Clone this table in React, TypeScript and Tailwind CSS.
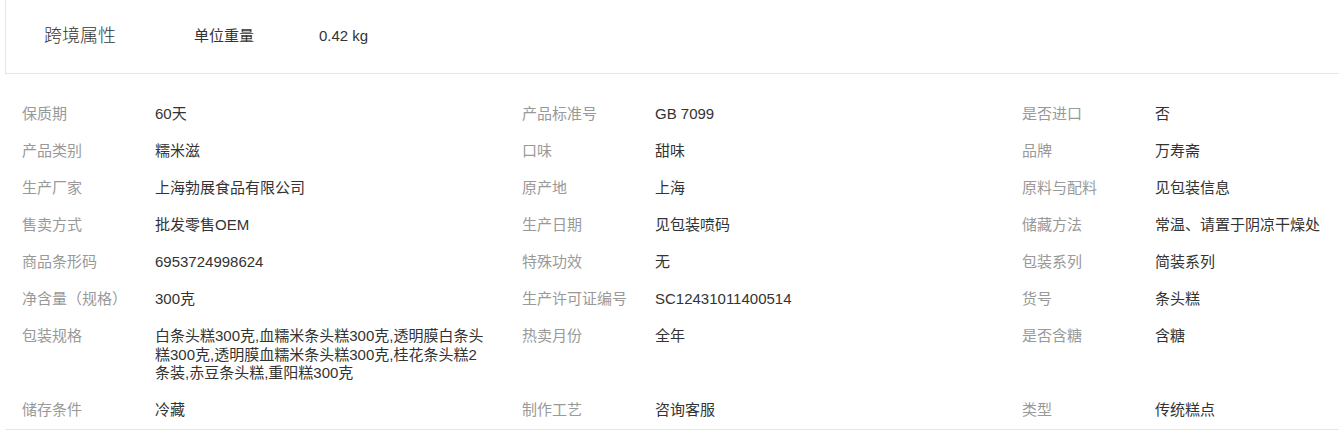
import React from "react";

const rows: [string, string][] = [
  ["保质期", "60天"],
  ["产品标准号", "GB 7099"],
  ["是否进口", "否"],
  ["产品类别", "糯米滋"],
  ["口味", "甜味"],
  ["品牌", "万寿斋"],
  ["生产厂家", "上海勃展食品有限公司"],
  ["原产地", "上海"],
  ["原料与配料", "见包装信息"],
  ["售卖方式", "批发零售OEM"],
  ["生产日期", "见包装喷码"],
  ["储藏方法", "常温、请置于阴凉干燥处"],
  ["商品条形码", "6953724998624"],
  ["特殊功效", "无"],
  ["包装系列", "简装系列"],
  ["净含量（规格）", "300克"],
  ["生产许可证编号", "SC12431011400514"],
  ["货号", "条头糕"],
  [
    "包装规格",
    "白条头糕300克,血糯米条头糕300克,透明膜白条头糕300克,透明膜血糯米条头糕300克,桂花条头糕2条装,赤豆条头糕,重阳糕300克",
  ],
  ["热卖月份", "全年"],
  ["是否含糖", "含糖"],
  ["储存条件", "冷藏"],
  ["制作工艺", "咨询客服"],
  ["类型", "传统糕点"],
];

const App = () => {
  return (
    <div
      className="w-full overflow-hidden bg-white text-[15px]"
      style={{ fontFamily: '"Liberation Sans", "Noto Sans CJK SC", sans-serif' }}
    >
      <div className="ml-[5px] w-[1600px]">
        {/* cross-border attributes */}
        <div className="flex h-[74px] items-center border-b border-l border-[#e5e5e5] text-[#333]">
          <div className="w-[188px] pl-[38px] text-[18px] font-light">跨境属性</div>
          <div className="w-[125px]">单位重量</div>
          <div>0.42 kg</div>
        </div>

        {/* product attributes */}
        <div className="mt-[22px] grid w-[1500px] grid-cols-[500px_500px_500px] border-b border-[#e5e5e5]">
          {rows.map(([label, value]) => (
            <div key={label} className="flex py-[9.25px] pl-[17px] leading-[18.5px]">
              <div className="w-[133px] shrink-0 text-[#999]">{label}</div>
              <div className="w-[335px] text-[#333]">{value}</div>
            </div>
          ))}
        </div>
      </div>
    </div>
  );
};

export default App;
